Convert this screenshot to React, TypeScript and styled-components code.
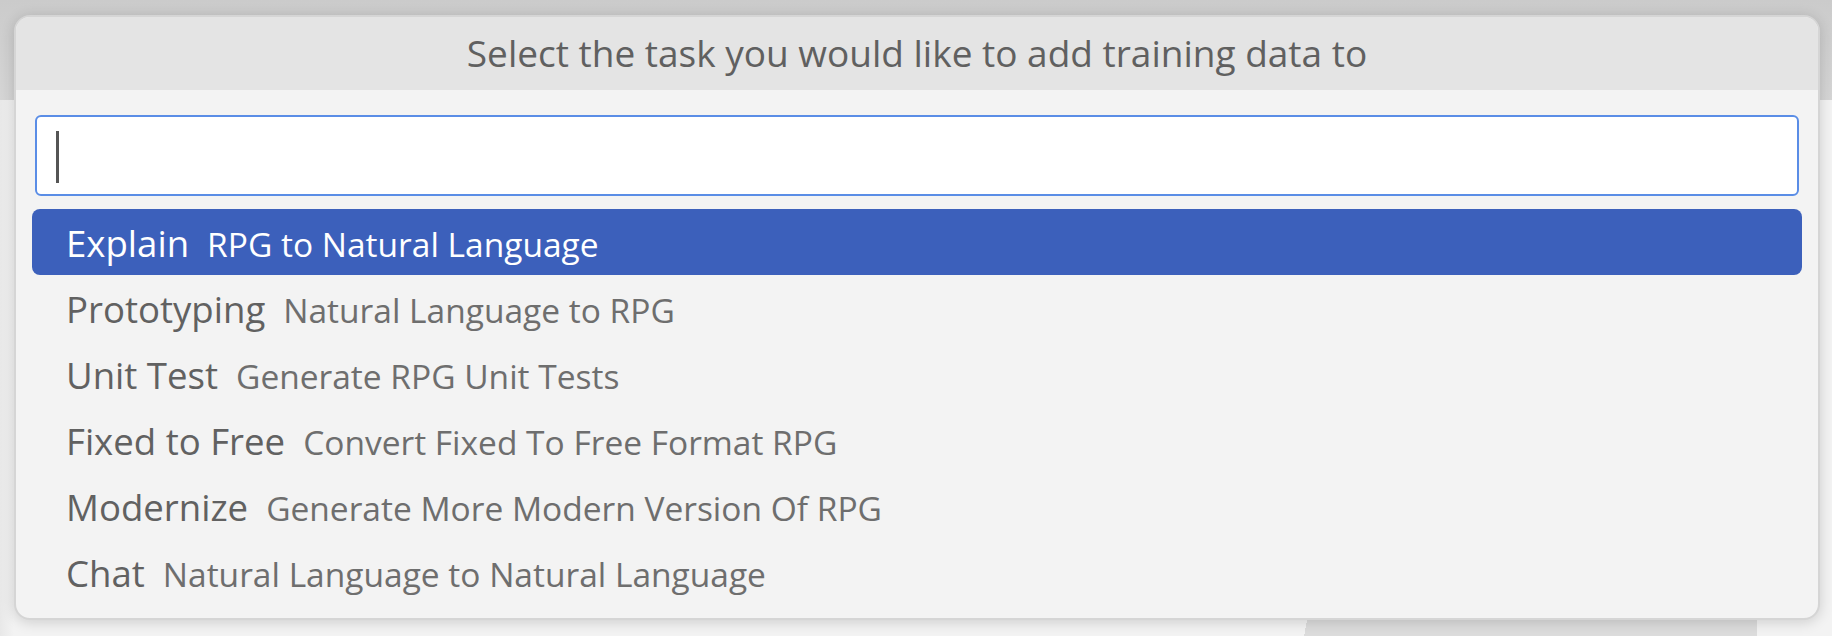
import React from "react";
import styled, { createGlobalStyle } from "styled-components";

const GlobalStyle = createGlobalStyle`
  html, body {
    margin: 0;
    padding: 0;
  }
  body {
    width: 1832px;
    height: 636px;
    overflow: hidden;
    font-family: "Open Sans", "Noto Sans", sans-serif;
    background-color: #f2f2f2;
    background-image:
      linear-gradient(to bottom, #cbcbcb 0px, #d5d5d5 100px),
      linear-gradient(100deg, transparent 0px, transparent 10px, #dcdcdc 10px, #dcdcdc 100%),
      linear-gradient(to right, #e8e8e8, #f3f3f3 14px);
    background-size: 100% 100px, 460px 20px, 100% 100%;
    background-position: 0 0, 1297px 619px, 0 0;
    background-repeat: no-repeat;
  }
`;

const Page = styled.div`
  padding: 15px 12px 0 14px;
`;

const Panel = styled.div`
  width: 1802px;
  border: 2px solid #d5d5d5;
  border-radius: 16px;
  background: #f3f3f3;
  box-shadow: 0 2px 14px rgba(0, 0, 0, 0.16);
  overflow: hidden;
  display: flex;
  flex-direction: column;
`;

const TitleBar = styled.div`
  height: 73px;
  background: #e4e4e4;
  display: flex;
  align-items: center;
  justify-content: center;
  color: #606060;
  font-size: 37px;
  line-height: 1;
  padding-bottom: 2px;
  box-sizing: border-box;
`;

const Body = styled.div`
  display: flex;
  flex-direction: column;
  padding: 25px 16px 13px 16px;
`;

const InputBox = styled.div`
  margin: 0 3px;
  height: 81px;
  box-sizing: border-box;
  border: 2px solid #5a8de6;
  border-radius: 6px;
  background: #ffffff;
  display: flex;
  align-items: center;
  padding-left: 19px;
`;

const Caret = styled.span`
  display: block;
  width: 3px;
  height: 52px;
  background: #555555;
  margin-top: 2px;
`;

const List = styled.div`
  margin-top: 13px;
  display: flex;
  flex-direction: column;
`;

const Row = styled.div<{ $active?: boolean }>`
  height: 66px;
  box-sizing: border-box;
  border-radius: 8px;
  display: flex;
  align-items: center;
  gap: 18px;
  padding-left: 34px;
  padding-top: 3px;
  background: ${(p) => (p.$active ? "#3c60bb" : "transparent")};
  color: ${(p) => (p.$active ? "#ffffff" : "#616161")};
  white-space: nowrap;
`;

const Label = styled.span`
  font-size: 36.6px;
  line-height: 1;
`;

const Description = styled.span<{ $active?: boolean }>`
  font-size: 33.5px;
  line-height: 1;
  color: ${(p) => (p.$active ? "#ffffff" : "#6e6e6e")};
  padding-top: 3px;
`;

const items = [
  { label: "Explain", desc: "RPG to Natural Language" },
  { label: "Prototyping", desc: "Natural Language to RPG" },
  { label: "Unit Test", desc: "Generate RPG Unit Tests" },
  { label: "Fixed to Free", desc: "Convert Fixed To Free Format RPG" },
  { label: "Modernize", desc: "Generate More Modern Version Of RPG" },
  { label: "Chat", desc: "Natural Language to Natural Language" },
];

export default function App() {
  return (
    <>
      <GlobalStyle />
      <Page>
        <Panel>
          <TitleBar>Select the task you would like to add training data to</TitleBar>
          <Body>
            <InputBox>
              <Caret />
            </InputBox>
            <List>
              {items.map((it, i) => (
                <Row key={it.label} $active={i === 0}>
                  <Label>{it.label}</Label>
                  <Description $active={i === 0}>{it.desc}</Description>
                </Row>
              ))}
            </List>
          </Body>
        </Panel>
      </Page>
    </>
  );
}
